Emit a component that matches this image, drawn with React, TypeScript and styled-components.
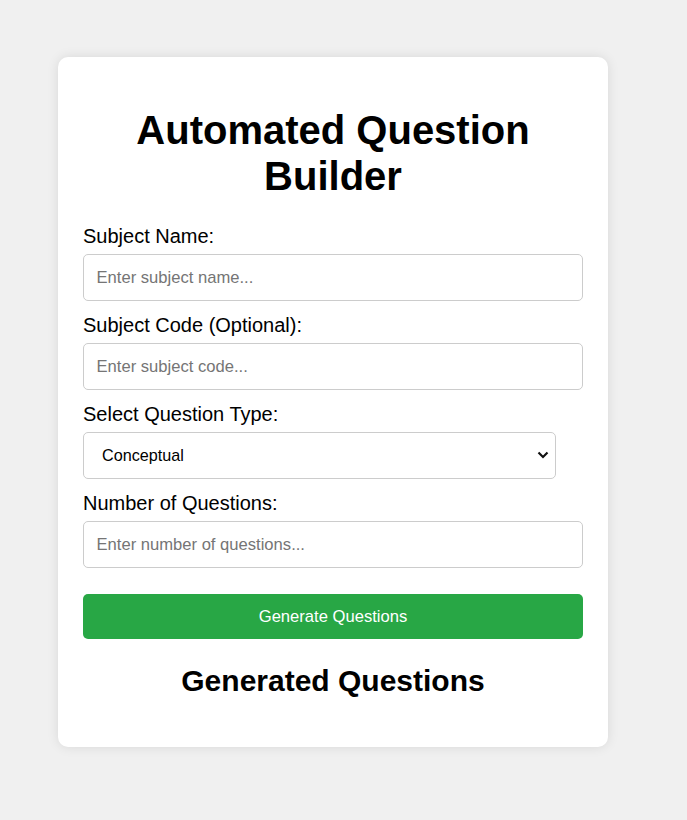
import React from "react";
import styled, { createGlobalStyle } from "styled-components";

const GlobalStyle = createGlobalStyle`
    body {
        margin: 0;
        background-color: #f0f0f0;
        font-family: "Liberation Sans", Arial, sans-serif;
    }
`;

const Page = styled.div`
    display: flex;
    align-items: flex-start;
    min-height: 820px;
    padding: 57px 0 0 58px;
    box-sizing: border-box;
`;

const Card = styled.div`
    display: flex;
    flex-direction: column;
    width: 550px;
    padding: 25px;
    box-sizing: border-box;
    border-radius: 10px;
    background-color: #ffffff;
    box-shadow: 0 0 12px rgba(0, 0, 0, 0.1);
`;

const Title = styled.h1`
    margin: 24.5px 0 26.5px 0;
    font-size: 40px;
    font-weight: 700;
    line-height: 46px;
    text-align: center;
    color: #000000;
`;

const Label = styled.label`
    display: block;
    margin: 0 0 6.25px 0;
    font-size: 20px;
    line-height: 23px;
    color: #000000;
`;

const Field = styled.input`
    display: block;
    width: 100%;
    height: 47px;
    margin: 0 0 12.5px 0;
    padding: 0 12.5px;
    box-sizing: border-box;
    border: 1px solid #cccccc;
    border-radius: 5px;
    font-family: "Liberation Sans", Arial, sans-serif;
    font-size: 16.6px;
    color: #000000;
    outline: none;

    &::placeholder {
        color: #757575;
    }
`;

const SelectWrap = styled.div`
    position: relative;
    width: 473px;
    margin: 0 0 13px 0;
`;

const Select = styled.select`
    display: block;
    width: 100%;
    height: 47px;
    padding: 0 30px 0 18px;
    box-sizing: border-box;
    border: 1px solid #cccccc;
    border-radius: 5px;
    background-color: #ffffff;
    font-family: "Liberation Sans", Arial, sans-serif;
    font-size: 16.2px;
    color: #000000;
    appearance: none;
    outline: none;
`;

const Chevron = styled.svg`
    position: absolute;
    right: 7px;
    top: 18px;
    pointer-events: none;
`;

const Button = styled.button`
    display: block;
    width: 100%;
    height: 45px;
    margin: 13.5px 0 0 0;
    border: none;
    border-radius: 5px;
    background-color: #28a745;
    font-family: "Liberation Sans", Arial, sans-serif;
    font-size: 16.6px;
    color: #ffffff;
    cursor: pointer;
`;

const Subtitle = styled.h2`
    margin: 24.5px 0 24px 0;
    font-size: 30px;
    font-weight: 700;
    line-height: 34.5px;
    text-align: center;
    color: #000000;
`;

export default function App() {
    return (
        <>
            <GlobalStyle/>
            <Page>
                <Card>
                    <Title>Automated Question Builder</Title>

                    <Label htmlFor="subject-name">Subject Name:</Label>
                    <Field id="subject-name" type="text" placeholder="Enter subject name..."/>

                    <Label htmlFor="subject-code">Subject Code (Optional):</Label>
                    <Field id="subject-code" type="text" placeholder="Enter subject code..."/>

                    <Label htmlFor="question-type">Select Question Type:</Label>
                    <SelectWrap>
                        <Select id="question-type" defaultValue="conceptual">
                            <option value="conceptual">Conceptual</option>
                            <option value="numerical">Numerical</option>
                            <option value="mcq">Multiple Choice</option>
                        </Select>
                        <Chevron width="12" height="10" viewBox="0 0 12 10">
                            <path d="M1.5 2.5 L6 7 L10.5 2.5" fill="none" stroke="#111" strokeWidth="2.2"/>
                        </Chevron>
                    </SelectWrap>

                    <Label htmlFor="question-count">Number of Questions:</Label>
                    <Field id="question-count" type="number" placeholder="Enter number of questions..."/>

                    <Button type="button">Generate Questions</Button>

                    <Subtitle>Generated Questions</Subtitle>
                </Card>
            </Page>
        </>
    );
}
